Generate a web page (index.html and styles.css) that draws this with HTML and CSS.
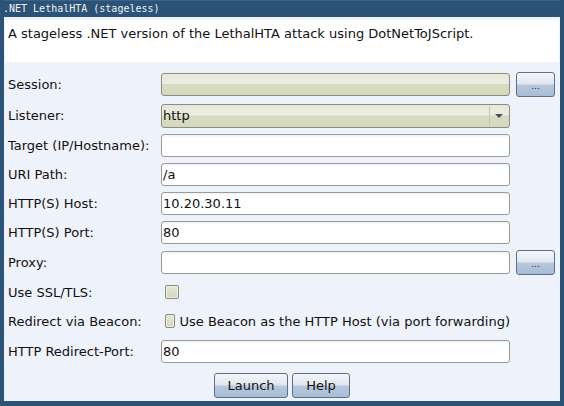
FILE: index.html
```html
<!DOCTYPE html>
<html>
<head>
<meta charset="utf-8">
<link rel="stylesheet" href="styles.css">
</head>
<body>
<div class="window">
  <div class="titlebar">.NET LethalHTA (stageless)</div>
  <div class="content">
    <div class="desc">A stageless .NET version of the LethalHTA attack using DotNetToJScript.</div>
    <div class="form">
      <div class="label">Session:</div>
      <div class="field combo"></div>
      <div class="btn small">...</div>

      <div class="label">Listener:</div>
      <div class="field combo select"><span class="val">http</span><span class="arrow"></span></div>
      <div></div>

      <div class="label">Target (IP/Hostname):</div>
      <div class="field text"></div>
      <div></div>

      <div class="label">URI Path:</div>
      <div class="field text">/a</div>
      <div></div>

      <div class="label">HTTP(S) Host:</div>
      <div class="field text">10.20.30.11</div>
      <div></div>

      <div class="label">HTTP(S) Port:</div>
      <div class="field text">80</div>
      <div></div>

      <div class="label">Proxy:</div>
      <div class="field text"></div>
      <div class="btn small">...</div>

      <div class="label">Use SSL/TLS:</div>
      <div class="check-row"><span class="check"></span></div>
      <div></div>

      <div class="label">Redirect via Beacon:</div>
      <div class="check-row"><span class="check"></span><span class="check-label">Use Beacon as the HTTP Host (via port forwarding)</span></div>
      <div></div>

      <div class="label">HTTP Redirect-Port:</div>
      <div class="field text">80</div>
      <div></div>
    </div>
    <div class="actions">
      <div class="btn launch">Launch</div>
      <div class="btn help">Help</div>
    </div>
  </div>
</div>
</body>
</html>
```

FILE: styles.css
```css
html, body {
  margin: 0;
  padding: 0;
}
body {
  width: 564px;
  height: 406px;
  overflow: hidden;
  font-family: "DejaVu Sans", sans-serif;
  font-size: 13px;
  color: #111;
}
.window {
  width: 564px;
  height: 406px;
  box-sizing: border-box;
  background: #2b5377;
  display: flex;
  flex-direction: column;
  padding: 0 4px 5px 4px;
}
.titlebar {
  height: 17px;
  line-height: 16px;
  font-family: "DejaVu Sans Mono", monospace;
  font-size: 10px;
  color: #eef2f6;
  margin-left: -1px;
  border-top: 1px solid #3b6489;
  box-sizing: border-box;
}
.content {
  flex: 1;
  background: #eef2fa;
  display: flex;
  flex-direction: column;
  padding-top: 3px;
}
.desc {
  background: #fff;
  height: 42px;
  margin: 0 1px;
  padding: 6px 0 0 3px;
  box-sizing: border-box;
  line-height: 16px;
}
.form {
  display: grid;
  grid-template-columns: 147px 349px 39px;
  grid-template-rows: 25px 25px 23px 23px 23px 23px 25px 22px 24px 24px;
  column-gap: 6px;
  row-gap: 6px;
  margin-top: 10px;
  padding-left: 4px;
  align-items: center;
}
.label {
  white-space: nowrap;
}
.field {
  height: 23px;
  box-sizing: border-box;
  border: 1px solid #8e8f88;
  border-radius: 3px;
  display: flex;
  align-items: center;
  padding-left: 1px;
  line-height: 21px;
}
.text {
  background: linear-gradient(#f2f2f2 0, #ffffff 3px, #ffffff 100%);
  border-color: #9a9a98;
}
.combo {
  background: linear-gradient(#e7e9da 0, #ecede2 45%, #d8dbc2 50%, #d6d9bf 100%);
  border-color: #8b8d7c;
}
.select {
  height: 24px;
}
.select .val {
  flex: 1;
}
.select .arrow {
  width: 19px;
  height: 20px;
  border-left: 1px solid #c5c8b0;
  display: flex;
  align-items: center;
  justify-content: center;
  box-sizing: border-box;
  margin-right: 1px;
}
.select .arrow::after {
  content: "";
  width: 0;
  height: 0;
  border-left: 4px solid transparent;
  border-right: 4px solid transparent;
  border-top: 4px solid #4e4e4e;
  margin-top: 1px;
}
.btn {
  box-sizing: border-box;
  border: 1px solid #5a7189;
  border-radius: 3px;
  background: linear-gradient(#f4f6f9 0, #e2e8f0 45%, #b5c7dc 55%, #a8bdd6 100%);
  display: flex;
  align-items: center;
  justify-content: center;
  height: 25px;
}
.small {
  width: 39px;
  font-size: 9px;
  padding-top: 3px;
  color: #222;
}
.check-row {
  display: flex;
  align-items: center;
  margin-left: 4px;
}
.check {
  width: 14px;
  height: 14px;
  box-sizing: border-box;
  border: 1px solid #898b78;
  border-radius: 2px;
  background: linear-gradient(#e6e8d6, #d3d6bb);
  box-shadow: inset 0 0 0 1px #eef0e2;
}
.check-label {
  margin-left: 4px;
  white-space: nowrap;
}
.actions {
  display: flex;
  justify-content: center;
  gap: 4px;
  margin-top: 10px;
}
.launch {
  width: 74px;
}
.help {
  width: 58px;
}
```
